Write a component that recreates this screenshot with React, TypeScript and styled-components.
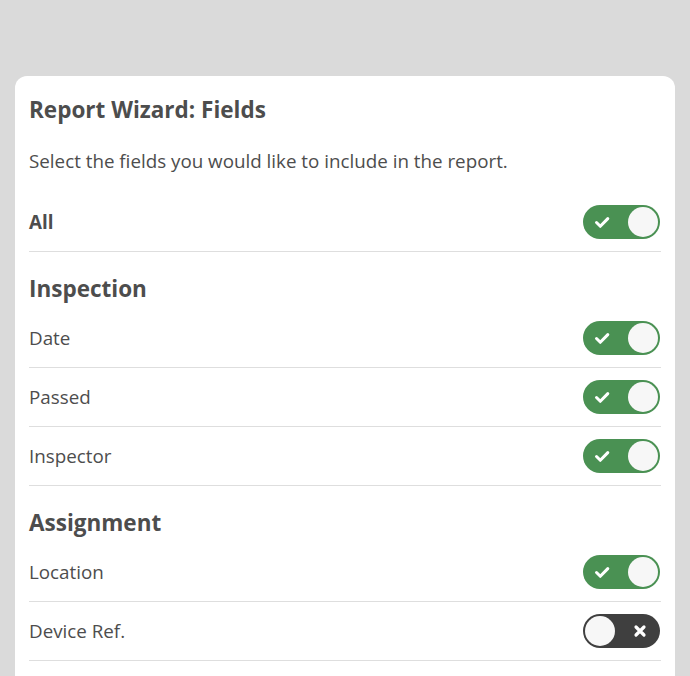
import React, { useState } from 'react'
import styled, { createGlobalStyle } from 'styled-components'

const GlobalStyle = createGlobalStyle`
  html, body {
    margin: 0;
    padding: 0;
    background: #dadada;
    font-family: 'Open Sans', 'Noto Sans', sans-serif;
    color: #4d4d4d;
  }
`

const Page = styled.div`
  padding: 76px 15px 0 15px;
  height: 676px;
  box-sizing: border-box;
  overflow: hidden;
`

const Card = styled.div`
  background: #fff;
  border-radius: 12px 12px 0 0;
  padding: 16px 14px 40px 14px;
  min-height: 700px;
  box-sizing: border-box;
`

const Title = styled.h1`
  margin: 0;
  font-size: 22.5px;
  font-weight: 700;
  line-height: 36px;
`

const Intro = styled.p`
  margin: 21px 0 20px;
  font-size: 18.8px;
  line-height: 24px;
`

const Heading = styled.h2`
  margin: 0 0 4px;
  padding-top: 21px;
  font-size: 22.5px;
  font-weight: 700;
  line-height: 32px;
`

const Row = styled.div<{ $strong?: boolean }>`
  display: flex;
  align-items: center;
  justify-content: space-between;
  height: 58px;
  border-bottom: 1px solid #dedede;
  font-size: 18.8px;
  font-weight: ${(p) => (p.$strong ? 700 : 400)};
`

const Track = styled.button<{ $on: boolean }>`
  position: relative;
  width: 77px;
  height: 34px;
  padding: 0;
  margin-right: 1px;
  border: none;
  border-radius: 17px;
  background: ${(p) => (p.$on ? '#4a9153' : '#3f3f3f')};
  cursor: pointer;
`

const Knob = styled.span<{ $on: boolean }>`
  position: absolute;
  top: 2px;
  left: ${(p) => (p.$on ? '45px' : '2px')};
  width: 30px;
  height: 30px;
  border-radius: 50%;
  background: #f7f7f7;
`

const Mark = styled.svg<{ $on: boolean }>`
  position: absolute;
  top: 9px;
  left: ${(p) => (p.$on ? '11px' : '49px')};
  width: 16px;
  height: 16px;
`

const Toggle = ({ on, onClick }: { on: boolean; onClick: () => void }) => (
  <Track $on={on} onClick={onClick} aria-pressed={on}>
    <Mark $on={on} viewBox='0 0 16 16'>
      {on ? (
        <path d='M2.5 8.5l3.8 3.8L13.8 4.6' fill='none' stroke='#fff' strokeWidth='3' strokeLinecap='round' strokeLinejoin='round' />
      ) : (
        <path d='M4 4l8 8M12 4l-8 8' fill='none' stroke='#fff' strokeWidth='3.2' strokeLinecap='round' />
      )}
    </Mark>
    <Knob $on={on} />
  </Track>
)

const groups = [
  { name: 'Inspection', fields: ['Date', 'Passed', 'Inspector'] },
  { name: 'Assignment', fields: ['Location', 'Device Ref.'] }
]

export default function App() {
  const [values, setValues] = useState<Record<string, boolean>>({
    All: true,
    Date: true,
    Passed: true,
    Inspector: true,
    Location: true,
    'Device Ref.': false
  })

  const flip = (key: string) => setValues((v) => ({ ...v, [key]: !v[key] }))

  return (
    <Page>
      <GlobalStyle />
      <Card>
        <Title>Report Wizard: Fields</Title>
        <Intro>Select the fields you would like to include in the report.</Intro>
        <Row $strong>
          All
          <Toggle on={values.All} onClick={() => flip('All')} />
        </Row>
        {groups.map((g) => (
          <div key={g.name}>
            <Heading>{g.name}</Heading>
            {g.fields.map((f) => (
              <Row key={f}>
                {f}
                <Toggle on={values[f]} onClick={() => flip(f)} />
              </Row>
            ))}
          </div>
        ))}
      </Card>
    </Page>
  )
}
